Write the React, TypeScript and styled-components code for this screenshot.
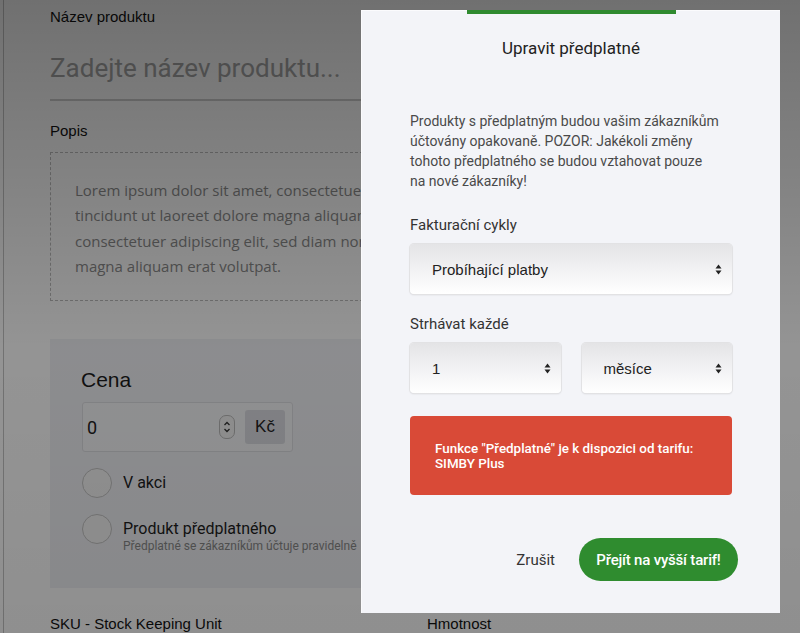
import React from "react";
import styled, { createGlobalStyle } from "styled-components";

const Global = createGlobalStyle`
  html, body { margin: 0; padding: 0; }
  body { width: 800px; height: 633px; overflow: hidden; font-family: "Liberation Sans", Arial, sans-serif; }
`;

const Stage = styled.div`
  position: relative;
  width: 800px;
  height: 633px;
  overflow: hidden;
  background: #ffffff;
`;

const Page = styled.div`
  margin-left: 3px;
  height: 100%;
  border-left: 1px solid #c4c4c4;
  padding: 8px 0 0 46px;
  box-sizing: border-box;
  display: flex;
  flex-direction: column;
  width: 760px;
`;

const FieldLabel = styled.div<{ $mt?: number }>`
  font-family: "Liberation Sans", Arial, sans-serif;
  font-size: 15px;
  line-height: 18px;
  color: #111;
  margin-top: ${(p) => p.$mt ?? 0}px;
  white-space: nowrap;
`;

const TitleInput = styled.div`
  margin-top: 26px;
  font-family: Roboto, sans-serif;
  font-size: 26px;
  line-height: 32px;
  color: #a6a6a6;
  padding-bottom: 15px;
  border-bottom: 2px solid #cfcfcf;
`;

const DescBox = styled.div`
  margin-top: 12px;
  height: 150px;
  box-sizing: border-box;
  border: 1px dashed #bdbdbd;
  padding: 25px 0 0 24px;
`;

const DescText = styled.div`
  width: 286px;
  overflow: hidden;
  font-family: "Open Sans", sans-serif;
  font-size: 15px;
  line-height: 25.3px;
  color: #8c8c8c;
  white-space: nowrap;
`;

const PriceBox = styled.div`
  margin-top: 38px;
  height: 250px;
  box-sizing: border-box;
  background: #f1f2f6;
  padding: 29px 0 0 31px;
  display: flex;
  flex-direction: column;
`;

const PriceTitle = styled.div`
  font-family: "Liberation Sans", Arial, sans-serif;
  font-size: 21px;
  line-height: 24px;
  color: #1c1c1c;
`;

const PriceInput = styled.div`
  margin-top: 10px;
  margin-left: 1px;
  width: 211px;
  height: 50px;
  box-sizing: border-box;
  border: 1px solid #dedfe3;
  border-radius: 3px;
  background: #f7f8fa;
  display: flex;
  align-items: center;
  padding: 0 7px 0 4px;
`;

const PriceValue = styled.span`
  flex: 1;
  font-family: Roboto, sans-serif;
  font-size: 18px;
  color: #222;
`;

const Stepper = styled.span`
  width: 14px;
  height: 22px;
  border: 1px solid #bbb;
  border-radius: 7px;
  background: #f4f4f4;
  display: flex;
  align-items: center;
  justify-content: center;
  margin-right: 10px;
`;

const Currency = styled.span`
  width: 40px;
  height: 34px;
  border-radius: 3px;
  background: #dcdde3;
  display: flex;
  align-items: center;
  justify-content: center;
  font-family: "Liberation Sans", Arial, sans-serif;
  font-size: 17px;
  color: #222;
`;

const RadioRow = styled.div<{ $mt: number }>`
  margin-top: ${(p) => p.$mt}px;
  margin-left: 1px;
  display: flex;
  align-items: flex-start;
  gap: 11px;
`;

const Circle = styled.span`
  width: 30px;
  height: 30px;
  box-sizing: border-box;
  border-radius: 50%;
  border: 1px solid #c5c5c5;
  background: #f6f6f6;
  flex: none;
`;

const RadioText = styled.div`
  display: flex;
  flex-direction: column;
  padding-top: 5px;
  width: 238px;
  overflow: hidden;
`;

const RadioLabel = styled.span`
  font-family: Roboto, sans-serif;
  font-size: 16px;
  line-height: 20px;
  color: #1e1e1e;
  white-space: nowrap;
`;

const RadioHint = styled.span`
  font-family: Roboto, sans-serif;
  font-size: 12px;
  line-height: 14px;
  color: #8a8a8a;
  white-space: nowrap;
`;

const TwoCols = styled.div`
  margin-top: 27px;
  display: grid;
  grid-template-columns: 377px 1fr;
`;

const Overlay = styled.div`
  position: absolute;
  inset: 0;
  background: linear-gradient(180deg, rgba(0, 0, 0, 0.56) 0%, rgba(0, 0, 0, 0.42) 55%, rgba(0, 0, 0, 0.44) 100%);
`;

const Modal = styled.div`
  position: absolute;
  left: 361px;
  top: 10px;
  width: 419px;
  height: 603px;
  box-sizing: border-box;
  background: #f3f4f8;
  border-top: 1px solid #fbfbfd;
  border-left: 1px solid #fbfbfd;
  display: flex;
  flex-direction: column;
  padding: 0 48px;
`;

const TopBar = styled.div`
  align-self: center;
  width: 209px;
  height: 4px;
  margin-top: -1px;
  background: #2f8a2f;
`;

const ModalTitle = styled.h2`
  margin: 24px 0 0;
  text-align: center;
  font-family: Roboto, sans-serif;
  font-weight: 400;
  font-size: 17px;
  line-height: 20px;
  color: #222;
`;

const Intro = styled.p`
  margin: 53px 0 0;
  font-family: Roboto, sans-serif;
  font-size: 14px;
  line-height: 20px;
  color: #4a4a4a;
  white-space: nowrap;
`;

const Label = styled.div<{ $mt: number }>`
  margin-top: ${(p) => p.$mt}px;
  font-family: Roboto, sans-serif;
  font-size: 15px;
  line-height: 20px;
  color: #333;
`;

const SelectRow = styled.div`
  margin-top: 9px;
  display: flex;
  gap: 21px;
`;

const Select = styled.div`
  flex: 1;
  height: 50px;
  box-sizing: border-box;
  border-radius: 4px;
  background: linear-gradient(180deg, #e4e4e6 0%, #f0f0f2 45%, #ffffff 100%);
  box-shadow: 0 0 0 1px #e2e2e4, 0 1px 2px rgba(0, 0, 0, 0.12);
  display: flex;
  align-items: center;
  padding: 0 10px 0 22px;
  font-family: "Liberation Sans", Arial, sans-serif;
  font-size: 15px;
  color: #222;
`;

const SelectText = styled.span`
  flex: 1;
`;

const Alert = styled.div`
  margin-top: 23px;
  height: 79px;
  box-sizing: border-box;
  border-radius: 4px;
  background: #d94a37;
  display: flex;
  align-items: center;
  padding: 0 25px;
  font-family: Roboto, sans-serif;
  font-weight: 500;
  font-size: 13.4px;
  line-height: 15px;
  color: #fff;
  white-space: nowrap;
`;

const Footer = styled.div`
  margin-top: auto;
  margin-right: -6px;
  margin-bottom: 32px;
  display: flex;
  justify-content: flex-end;
  align-items: center;
  gap: 24px;
`;

const Cancel = styled.button`
  border: none;
  background: none;
  padding: 0;
  font-family: Roboto, sans-serif;
  font-size: 15px;
  color: #333;
`;

const Primary = styled.button`
  width: 159px;
  height: 43px;
  border: none;
  border-radius: 22px;
  background: #2f8c2f;
  color: #fff;
  font-family: Roboto, sans-serif;
  font-weight: 500;
  font-size: 15px;
  letter-spacing: -0.2px;
  padding: 0;
`;

const Arrows = () => (
  <svg width="7" height="11" viewBox="0 0 7 11">
    <path d="M3.5 0.5 L6.5 4.5 L0.5 4.5 Z" fill="#222" />
    <path d="M3.5 10.5 L6.5 6.5 L0.5 6.5 Z" fill="#222" />
  </svg>
);

const Chevrons = () => (
  <svg width="8" height="16" viewBox="0 0 8 16">
    <path d="M1.5 6 L4 3.5 L6.5 6" stroke="#333" strokeWidth="1.3" fill="none" />
    <path d="M1.5 10 L4 12.5 L6.5 10" stroke="#333" strokeWidth="1.3" fill="none" />
  </svg>
);

export default function App() {
  return (
    <>
      <Global />
      <Stage>
        <Page>
          <FieldLabel>Název produktu</FieldLabel>
          <TitleInput>Zadejte název produktu...</TitleInput>
          <FieldLabel $mt={21}>Popis</FieldLabel>
          <DescBox>
            <DescText>
              Lorem ipsum dolor sit amet, consectetuer
              <br />
              tincidunt ut laoreet dolore magna aliquam
              <br />
              consectetuer adipiscing elit, sed diam nonummy
              <br />
              magna aliquam erat volutpat.
            </DescText>
          </DescBox>
          <PriceBox>
            <PriceTitle>Cena</PriceTitle>
            <PriceInput>
              <PriceValue>0</PriceValue>
              <Stepper>
                <Chevrons />
              </Stepper>
              <Currency>Kč</Currency>
            </PriceInput>
            <RadioRow $mt={16}>
              <Circle />
              <RadioText>
                <RadioLabel>V akci</RadioLabel>
              </RadioText>
            </RadioRow>
            <RadioRow $mt={16}>
              <Circle />
              <RadioText>
                <RadioLabel>Produkt předplatného</RadioLabel>
                <RadioHint>Předplatné se zákazníkům účtuje pravidelně</RadioHint>
              </RadioText>
            </RadioRow>
          </PriceBox>
          <TwoCols>
            <FieldLabel>SKU - Stock Keeping Unit</FieldLabel>
            <FieldLabel>Hmotnost</FieldLabel>
          </TwoCols>
        </Page>
        <Overlay />
        <Modal>
          <TopBar />
          <ModalTitle>Upravit předplatné</ModalTitle>
          <Intro>
            Produkty s předplatným budou vašim zákazníkům
            <br />
            účtovány opakovaně. POZOR: Jakékoli změny
            <br />
            tohoto předplatného se budou vztahovat pouze
            <br />
            na nové zákazníky!
          </Intro>
          <Label $mt={24}>Fakturační cykly</Label>
          <SelectRow>
            <Select>
              <SelectText>Probíhající platby</SelectText>
              <Arrows />
            </Select>
          </SelectRow>
          <Label $mt={20}>Strhávat každé</Label>
          <SelectRow>
            <Select>
              <SelectText>1</SelectText>
              <Arrows />
            </Select>
            <Select>
              <SelectText>měsíce</SelectText>
              <Arrows />
            </Select>
          </SelectRow>
          <Alert>
            <div>
              Funkce "Předplatné" je k dispozici od tarifu:
              <br />
              SIMBY Plus
            </div>
          </Alert>
          <Footer>
            <Cancel>Zrušit</Cancel>
            <Primary>Přejít na vyšší tarif!</Primary>
          </Footer>
        </Modal>
      </Stage>
    </>
  );
}
